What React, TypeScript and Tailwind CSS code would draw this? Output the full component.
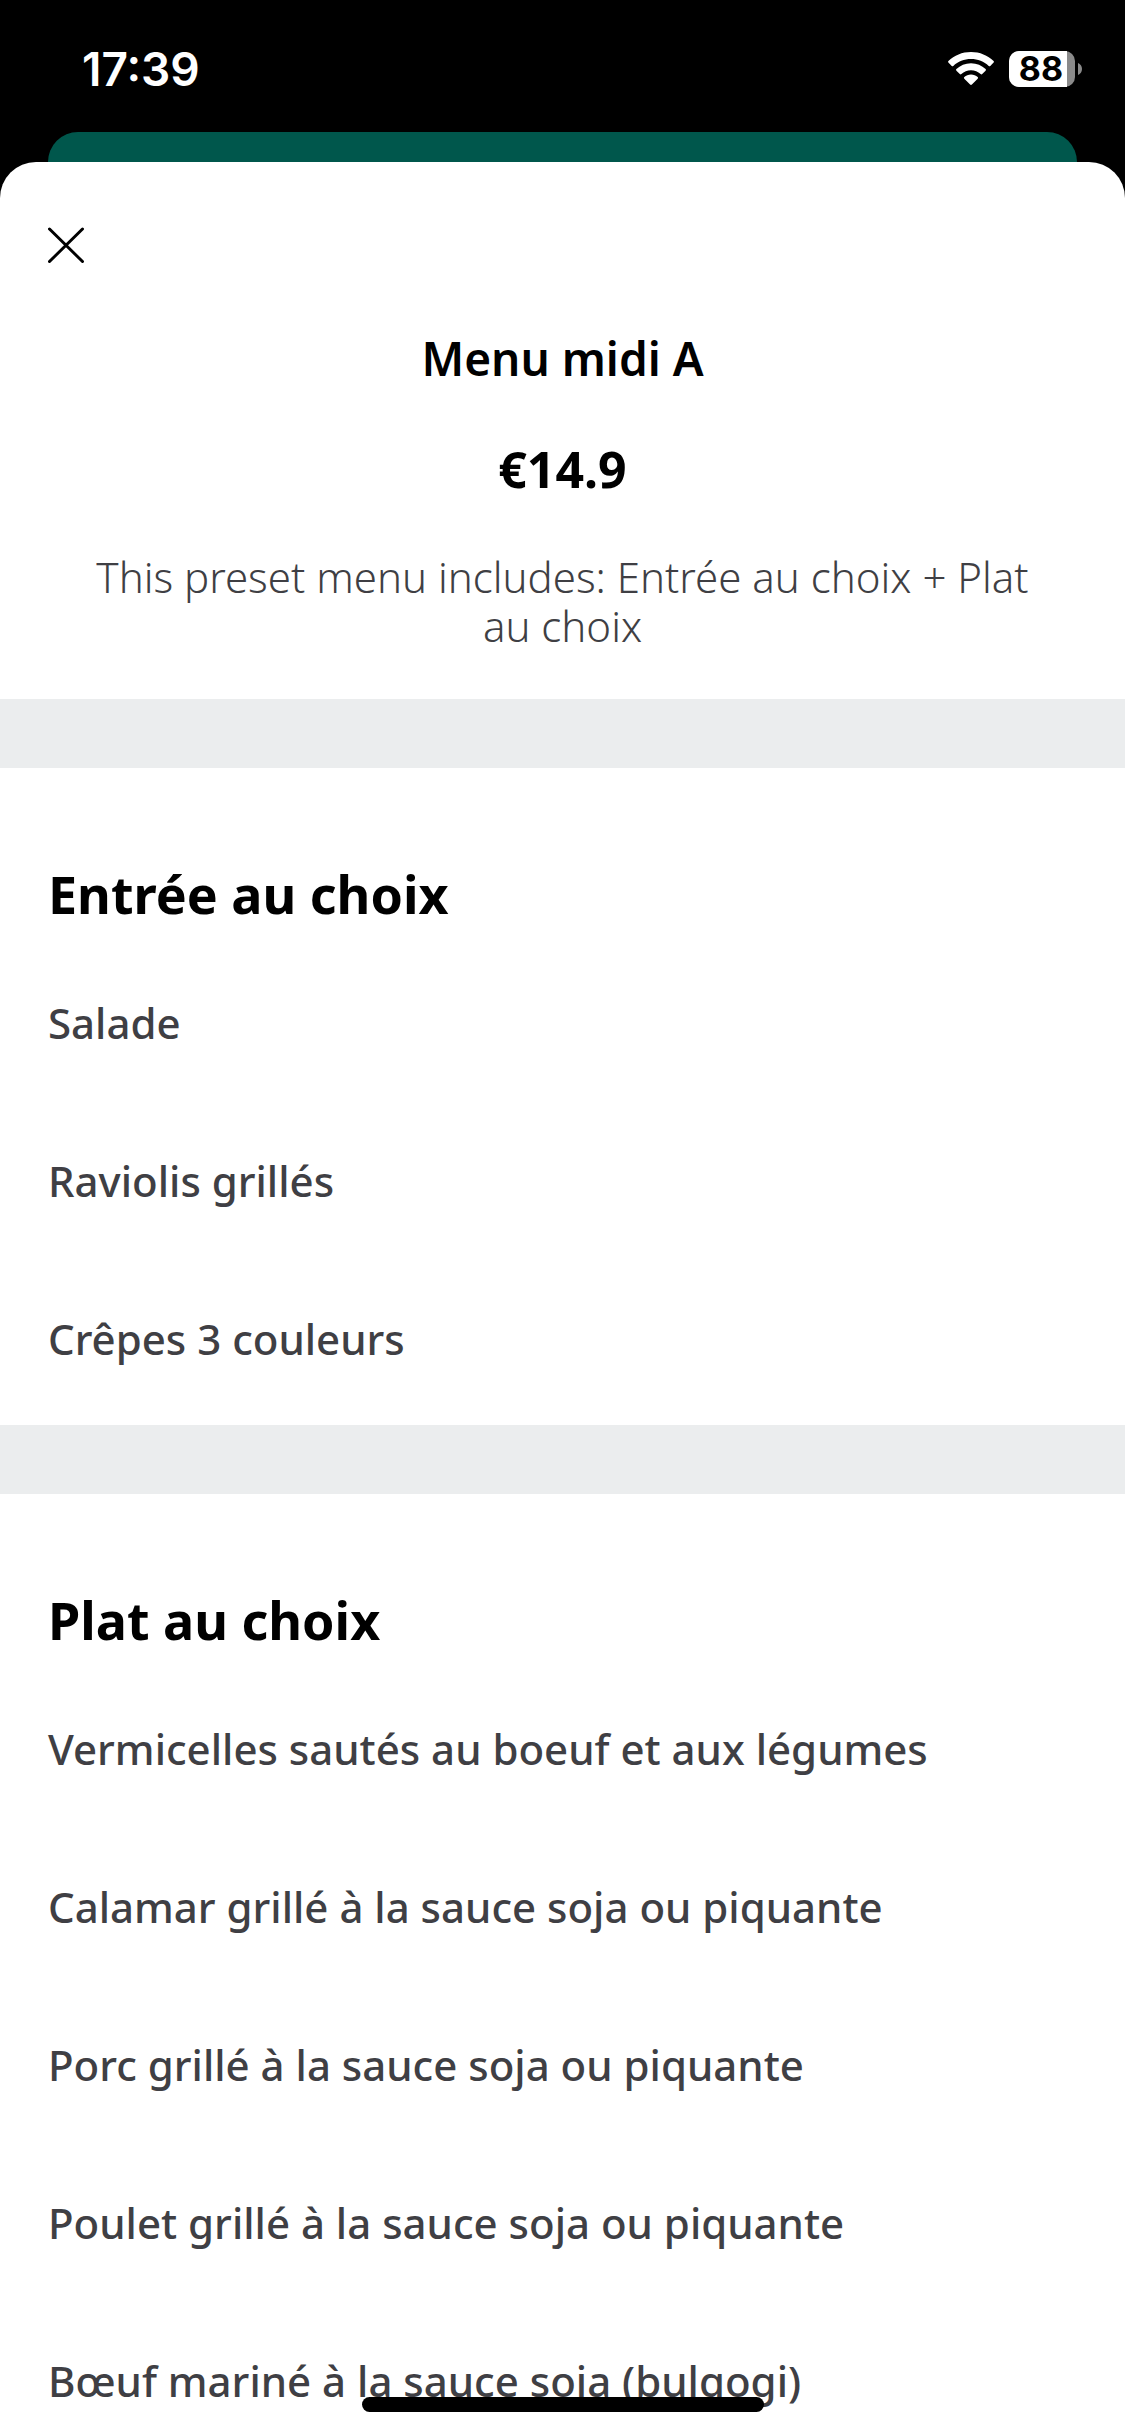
interface MenuSection {
  title: string;
  items: string[];
}

const SECTIONS: MenuSection[] = [
  {
    title: "Entrée au choix",
    items: ["Salade", "Raviolis grillés", "Crêpes 3 couleurs"],
  },
  {
    title: "Plat au choix",
    items: [
      "Vermicelles sautés au boeuf et aux légumes",
      "Calamar grillé à la sauce soja ou piquante",
      "Porc grillé à la sauce soja ou piquante",
      "Poulet grillé à la sauce soja ou piquante",
      "Bœuf mariné à la sauce soja (bulgogi)",
    ],
  },
];

function WifiIcon() {
  return (
    <svg width="46" height="34" viewBox="0 0 46 34" fill="white" aria-hidden="true">
      <path d="M23 0C31.800 0 39.800 3.400 45.600 9Q46.300 9.800 45.600 10.600L42.300 13.900Q41.500 14.600 40.700 13.900C36 9.500 29.800 7 23 7S10 9.500 5.300 13.900Q4.500 14.600 3.700 13.900L0.400 10.600Q-0.300 9.800 0.400 9C6.200 3.400 14.200 0 23 0Z" />
      <path d="M23 11.300C28.700 11.300 33.800 13.500 37.600 17.100Q38.400 17.900 37.600 18.700L34.200 22.100Q33.400 22.800 32.600 22.100C30 19.700 26.700 18.300 23 18.300S16 19.700 13.400 22.100Q12.600 22.800 11.800 22.100L8.400 18.700Q7.600 17.900 8.400 17.100C12.200 13.500 17.300 11.300 23 11.300Z" />
      <path d="M23 22.600C25.600 22.600 27.900 23.500 29.700 25.100Q30.500 25.900 29.700 26.700L23.900 32.600Q23 33.400 22.100 32.600L16.300 26.700Q15.500 25.900 16.300 25.100C18.100 23.500 20.400 22.600 23 22.600Z" />
    </svg>
  );
}

function Battery({ level }: { level: number }) {
  return (
    <div className="flex items-center gap-[3px]">
      <div className="relative flex h-9 w-[66px] items-center justify-center rounded-[10px] bg-[#8a8a8a]">
        <div className="absolute inset-y-0 left-0 rounded-l-[10px] bg-white" style={{ width: `${level}%` }} />
        <span className="relative pr-0.5 font-['Inter'] text-[34px] leading-[42px] font-bold text-black">
          {level}
        </span>
      </div>
      <svg width="4" height="12" viewBox="0 0 4 12" fill="#8a8a8a" aria-hidden="true">
        <path d="M0 0C2.400 1 4 3.200 4 6S2.400 11 0 12Z" />
      </svg>
    </div>
  );
}

function StatusBar() {
  return (
    <div className="flex h-[132px] shrink-0 items-center justify-between pt-1.5 pr-[43px] pl-[82px]">
      <span className="font-['Inter'] text-[46px] leading-[48px] font-semibold text-white">17:39</span>
      <div className="flex items-center gap-[15px]">
        <WifiIcon />
        <Battery level={88} />
      </div>
    </div>
  );
}

function Section({ title, items }: MenuSection) {
  return (
    <section className="border-t-[69px] border-[#ebedee] px-12 pt-[94px] pb-[62px]">
      <h2 className="text-[52px] leading-[64px] font-bold text-black">{title}</h2>
      <ul className="mt-[72px] flex flex-col gap-[109px]">
        {items.map((item) => (
          <li key={item} className="text-[42px] leading-[49px] font-medium text-[#3f3f44]">
            {item}
          </li>
        ))}
      </ul>
    </section>
  );
}

export default function App() {
  return (
    <div className="relative flex h-screen flex-col overflow-hidden bg-black font-['Noto_Sans',sans-serif]">
      <StatusBar />

      {/* Page behind the sheet */}
      <div className="mx-12 h-[30px] shrink-0 rounded-t-[30px] bg-[#00574c]" />

      {/* Sheet */}
      <main className="flex-1 overflow-y-auto rounded-t-[36px] bg-white [scrollbar-width:none]">
        <header className="px-12 pt-16 pb-[49px] text-center">
          <button type="button" aria-label="Close" className="block">
            <svg width="38" height="38" viewBox="0 0 38 38" fill="none" stroke="black" strokeWidth="3" strokeLinecap="round" aria-hidden="true">
              <path d="M1.500 3L34.500 35.500M34.500 3L1.500 35.500" />
            </svg>
          </button>
          <h1 className="mt-[66px] text-[46px] leading-[56px] font-semibold text-black">Menu midi A</h1>
          <p className="mt-[55px] text-[50px] leading-[56px] font-bold text-black">€14.9</p>
          <p className="mt-[55px] px-8 text-[42px] leading-[49px] font-[350] text-[#3f3f44]">
            This preset menu includes: Entrée au choix + Plat au choix
          </p>
        </header>

        {SECTIONS.map((section) => (
          <Section key={section.title} {...section} />
        ))}
      </main>

      {/* Home indicator */}
      <div className="absolute bottom-6 left-1/2 h-[15px] w-[402px] -translate-x-1/2 rounded-full bg-black" />
    </div>
  );
}
